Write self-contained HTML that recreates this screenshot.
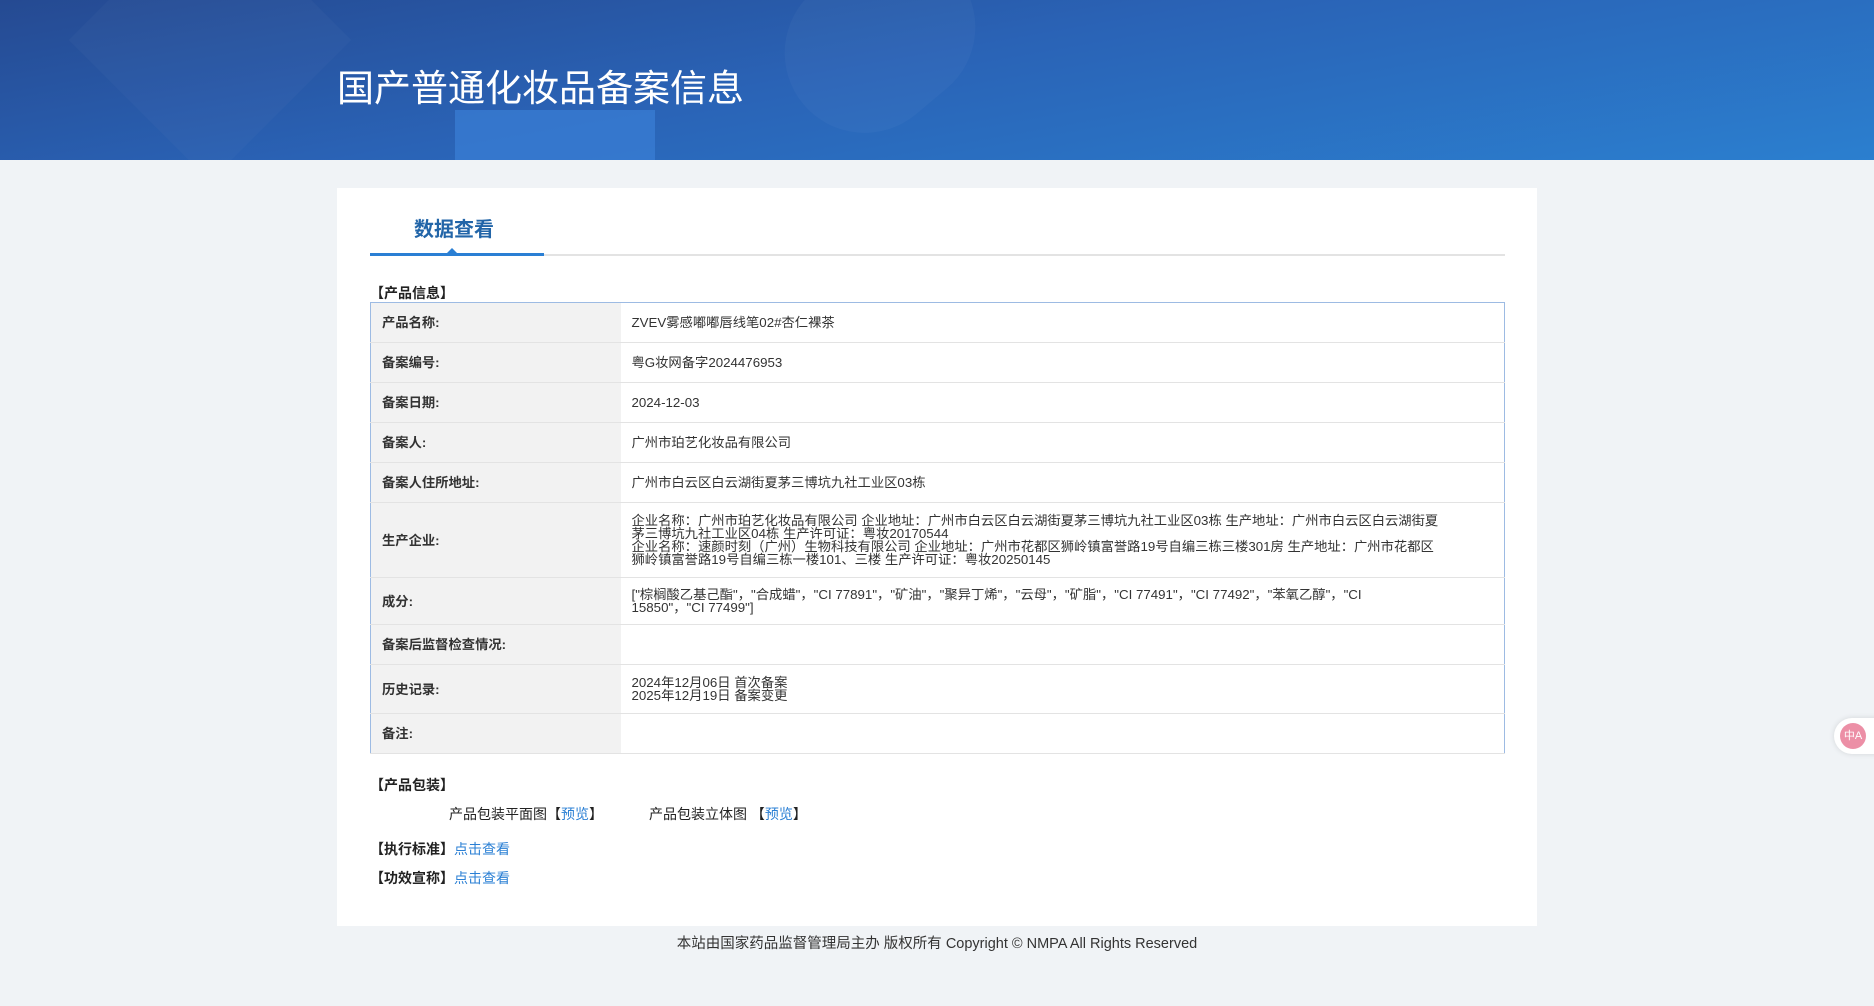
<!DOCTYPE html>
<html><head><meta charset="utf-8"><style>
*{margin:0;padding:0;box-sizing:border-box}
body{width:1874px;height:1006px;background:#f0f3f6;font-family:"Liberation Sans","Noto Sans CJK SC",sans-serif;color:#333;position:relative;overflow:hidden}
.hdr{position:absolute;left:0;top:0;width:1874px;height:160px;background:linear-gradient(170deg,#254a92 0%,#2a63b6 45%,#2b7fcf 100%);overflow:hidden}
.hdr .s1{position:absolute;left:455px;top:110px;width:200px;height:60px;background:#3a7fd6;opacity:.7}
.hdr .s2{position:absolute;left:110px;top:-60px;width:200px;height:200px;background:rgba(255,255,255,.025);transform:rotate(45deg)}
.hdr .s3{position:absolute;left:780px;top:-40px;width:200px;height:160px;background:rgba(255,255,255,.03);border-radius:80px;transform:rotate(-40deg)}
.hdr h1{position:absolute;left:337px;top:58px;color:#fff;font-size:37px;font-weight:normal}
.panel{position:absolute;left:337px;top:188px;width:1200px;height:738px;background:#fff}
.tab{position:absolute;left:414px;top:213px;font-size:20px;font-weight:bold;color:#2265a8}
.tabline{position:absolute;left:370px;top:254px;width:1135px;height:2px;background:#e3e3e3}
.tabline2{position:absolute;left:370px;top:253px;width:174px;height:3px;background:#2a7fd4}
.tri{position:absolute;left:446px;top:248px;width:0;height:0;border-left:6px solid transparent;border-right:6px solid transparent;border-bottom:6px solid #2a7fd4}
.sec{position:absolute;font-size:14px;font-weight:bold;color:#222}
table{position:absolute;left:370px;top:302px;width:1135px;border-collapse:collapse;border:1px solid #9dbbe3;font-size:13.3px}
td{border-bottom:1px solid #e3e3e3;vertical-align:middle;line-height:13px}
td.l{width:250px;background:#f2f2f2;font-weight:bold;padding-left:11px;color:#333}
td.v{padding-left:11px;color:#333;white-space:nowrap}
.a{color:#2a7fd4}
.foot{position:absolute;top:932px;left:0;width:1874px;text-align:center;font-size:14.5px;color:#333}
.fl{position:absolute;left:1834px;top:718px;width:60px;height:36px;background:#fff;border-radius:18px;box-shadow:0 0 6px rgba(0,0,0,.12)}
.fl div{position:absolute;left:6px;top:5px;width:26px;height:26px;border-radius:13px;background:#ec8fa6;color:#fff;font-size:11px;text-align:center;line-height:26px}
</style></head><body>
<div class="hdr"><div class="s2"></div><div class="s3"></div><div class="s1"></div><h1>国产普通化妆品备案信息</h1></div>
<div class="panel"></div>
<div class="tab">数据查看</div>
<div class="tabline"></div><div class="tabline2"></div><div class="tri"></div>
<div class="sec" style="left:370px;top:283px">【产品信息】</div>
<table>
<tr style="height:40px"><td class="l">产品名称:</td><td class="v">ZVEV雾感嘟嘟唇线笔02#杏仁裸茶</td></tr>
<tr style="height:40px"><td class="l">备案编号:</td><td class="v">粤G妆网备字2024476953</td></tr>
<tr style="height:40px"><td class="l">备案日期:</td><td class="v">2024-12-03</td></tr>
<tr style="height:40px"><td class="l">备案人:</td><td class="v">广州市珀艺化妆品有限公司</td></tr>
<tr style="height:40px"><td class="l">备案人住所地址:</td><td class="v">广州市白云区白云湖街夏茅三博坑九社工业区03栋</td></tr>
<tr style="height:75px"><td class="l">生产企业:</td><td class="v">企业名称：广州市珀艺化妆品有限公司 企业地址：广州市白云区白云湖街夏茅三博坑九社工业区03栋 生产地址：广州市白云区白云湖街夏<br>茅三博坑九社工业区04栋 生产许可证：粤妆20170544<br>企业名称：速颜时刻（广州）生物科技有限公司 企业地址：广州市花都区狮岭镇富誉路19号自编三栋三楼301房 生产地址：广州市花都区<br>狮岭镇富誉路19号自编三栋一楼101、三楼 生产许可证：粤妆20250145</td></tr>
<tr style="height:47px"><td class="l">成分:</td><td class="v">["棕榈酸乙基己酯"，"合成蜡"，"CI 77891"，"矿油"，"聚异丁烯"，"云母"，"矿脂"，"CI 77491"，"CI 77492"，"苯氧乙醇"，"CI<br>15850"，"CI 77499"]</td></tr>
<tr style="height:40px"><td class="l">备案后监督检查情况:</td><td class="v"></td></tr>
<tr style="height:49px"><td class="l">历史记录:</td><td class="v">2024年12月06日 首次备案<br>2025年12月19日 备案变更</td></tr>
<tr style="height:40px"><td class="l">备注:</td><td class="v"></td></tr>
</table>
<div class="sec" style="left:370px;top:775px">【产品包装】</div>
<div style="position:absolute;left:449px;top:804px;font-size:14px;color:#222">产品包装平面图【<span class="a">预览</span>】</div>
<div style="position:absolute;left:649px;top:804px;font-size:14px;color:#222">产品包装立体图 【<span class="a">预览</span>】</div>
<div class="sec" style="left:370px;top:839px">【执行标准】<span class="a" style="font-weight:normal">点击查看</span></div>
<div class="sec" style="left:370px;top:868px">【功效宣称】<span class="a" style="font-weight:normal">点击查看</span></div>
<div class="foot">本站由国家药品监督管理局主办 版权所有 Copyright © NMPA All Rights Reserved</div>
<div class="fl"><div>中A</div></div>
</body></html>
